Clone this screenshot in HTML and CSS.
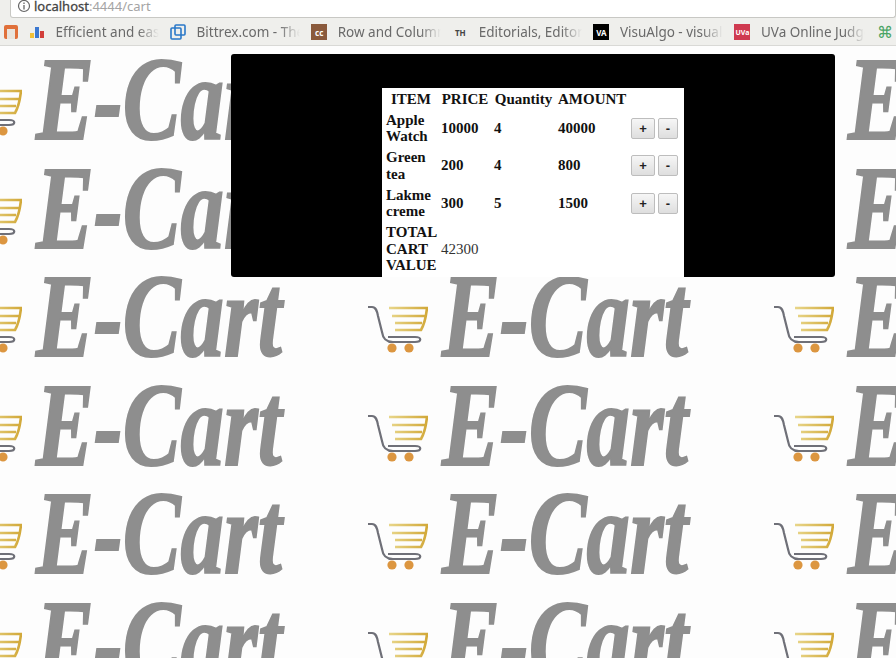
FILE: index.html
```html
<!DOCTYPE html>
<html>
<head>
  <title>Cart</title>
  <link rel="stylesheet" href="styles.css">
</head>
<body>
  <svg class="defs" width="0" height="0">
    <defs>
      <linearGradient id="gold" x1="0" y1="0" x2="1" y2="0">
        <stop offset="0" stop-color="#e8d68a"/>
        <stop offset="1" stop-color="#d2a93a"/>
      </linearGradient>
    </defs>
    <symbol id="cart" viewBox="0 0 60 48">
      <path d="M0 2 H4 C8 2 9 6 10 11 L14 27 C15 34 18 37 25 37 H47 C54 37 54 32 47 32 H20" fill="none" stroke="#6f7078" stroke-width="2.2"/>
      <path d="M21 3 H59 C58 12 56 20 53 25 H27 M24 11 H57 M27 18 H54" fill="none" stroke="url(#gold)" stroke-width="2.6"/>
      <circle cx="24" cy="43" r="4.6" fill="#dc9640"/>
      <circle cx="41" cy="43" r="4.6" fill="#dc9640"/>
    </symbol>
  </svg>

  <div class="page">
    <div class="addressRow">
      <div class="addressBar">
        <svg class="infoIcon" viewBox="0 0 14 14"><circle cx="7" cy="7" r="5.5" fill="none" stroke="#666" stroke-width="1.2"/><path d="M7 6 V10.5 M7 3.6 V5" stroke="#666" stroke-width="1.3"/></svg>
        <span class="host">localhost</span><span class="port">:4444/cart</span>
      </div>
    </div>

    <div class="bookmarks">
      <svg class="bmIcon first" viewBox="0 0 16 16"><rect x="1" y="1" width="14" height="14" rx="2" fill="#e0703a"/><rect x="4" y="5" width="8" height="10" fill="#e9e4dc"/></svg>
      <svg class="bmIcon" viewBox="0 0 16 16"><rect x="1" y="9" width="4" height="5" fill="#f2c037"/><rect x="6" y="3" width="4" height="11" fill="#3c78d0"/><rect x="11" y="7" width="4" height="7" fill="#d23f3a"/></svg>
      <span class="bmText">Efficient and easy</span>
      <svg class="bmIcon" viewBox="0 0 16 16"><rect x="1" y="4" width="10" height="11" rx="1" fill="none" stroke="#2a78c8" stroke-width="1.6"/><rect x="5" y="1" width="10" height="10" rx="1" fill="none" stroke="#2a78c8" stroke-width="1.6"/></svg>
      <span class="bmText">Bittrex.com - The</span>
      <span class="bmBadge brown">cc</span>
      <span class="bmText">Row and Column</span>
      <span class="bmBadge plain">TH</span>
      <span class="bmText">Editorials, Editor</span>
      <span class="bmBadge black">VA</span>
      <span class="bmText">VisuAlgo - visual</span>
      <span class="bmBadge red">UVa</span>
      <span class="bmText">UVa Online Judge</span>
      <span class="bmGreen">⌘</span>
    </div>

    <div class="wall">
      <div class="tile"><svg class="cartLogo"><use href="#cart"/></svg><span class="brand">E-Cart</span></div>
      <div class="tile"><svg class="cartLogo"><use href="#cart"/></svg><span class="brand">E-Cart</span></div>
      <div class="tile"><svg class="cartLogo"><use href="#cart"/></svg><span class="brand">E-Cart</span></div>
      <div class="tile"><svg class="cartLogo"><use href="#cart"/></svg><span class="brand">E-Cart</span></div>
      <div class="tile"><svg class="cartLogo"><use href="#cart"/></svg><span class="brand">E-Cart</span></div>
      <div class="tile"><svg class="cartLogo"><use href="#cart"/></svg><span class="brand">E-Cart</span></div>
      <div class="tile"><svg class="cartLogo"><use href="#cart"/></svg><span class="brand">E-Cart</span></div>
      <div class="tile"><svg class="cartLogo"><use href="#cart"/></svg><span class="brand">E-Cart</span></div>
      <div class="tile"><svg class="cartLogo"><use href="#cart"/></svg><span class="brand">E-Cart</span></div>
      <div class="tile"><svg class="cartLogo"><use href="#cart"/></svg><span class="brand">E-Cart</span></div>
      <div class="tile"><svg class="cartLogo"><use href="#cart"/></svg><span class="brand">E-Cart</span></div>
      <div class="tile"><svg class="cartLogo"><use href="#cart"/></svg><span class="brand">E-Cart</span></div>
      <div class="tile"><svg class="cartLogo"><use href="#cart"/></svg><span class="brand">E-Cart</span></div>
      <div class="tile"><svg class="cartLogo"><use href="#cart"/></svg><span class="brand">E-Cart</span></div>
      <div class="tile"><svg class="cartLogo"><use href="#cart"/></svg><span class="brand">E-Cart</span></div>
      <div class="tile"><svg class="cartLogo"><use href="#cart"/></svg><span class="brand">E-Cart</span></div>
      <div class="tile"><svg class="cartLogo"><use href="#cart"/></svg><span class="brand">E-Cart</span></div>
      <div class="tile"><svg class="cartLogo"><use href="#cart"/></svg><span class="brand">E-Cart</span></div>
    </div>

    <div class="modal">
      <table class="cartTable">
        <thead>
          <tr>
            <th>ITEM</th>
            <th>PRICE</th>
            <th>Quantity</th>
            <th>AMOUNT</th>
            <th></th>
          </tr>
        </thead>
        <tbody>
          <tr>
            <th>Apple Watch</th>
            <th>10000</th>
            <th>4</th>
            <th>40000</th>
            <td class="actions"><button class="btnPlus">+</button><button class="btnMinus">-</button></td>
          </tr>
          <tr>
            <th>Green tea</th>
            <th>200</th>
            <th>4</th>
            <th>800</th>
            <td class="actions"><button class="btnPlus">+</button><button class="btnMinus">-</button></td>
          </tr>
          <tr>
            <th>Lakme creme</th>
            <th>300</th>
            <th>5</th>
            <th>1500</th>
            <td class="actions"><button class="btnPlus">+</button><button class="btnMinus">-</button></td>
          </tr>
          <tr>
            <th>TOTAL CART VALUE</th>
            <td>42300</td>
            <td></td>
            <td></td>
            <td></td>
          </tr>
        </tbody>
      </table>
    </div>
  </div>
</body>
</html>
```

FILE: styles.css
```css
* {
  box-sizing: border-box;
}

html,
body {
  margin: 0;
  height: 100%;
  overflow: hidden;
}

body {
  background-color: #fdfdfd;
  font-family: "Noto Sans", sans-serif;
}

.defs {
  display: block;
  height: 0;
}

.page {
  position: relative;
  width: 896px;
  height: 658px;
  overflow: hidden;
  filter: blur(0.4px);
}

/* browser bars */
.addressRow {
  height: 19px;
  padding-left: 10px;
  padding-right: 0;
  background-color: #efefec;
}

.addressBar {
  height: 18px;
  display: flex;
  align-items: center;
  padding: 0 0 6px 6px;
  background-color: #fff;
  border: 1px solid #c8c8c4;
  border-top: 0;
  border-radius: 0 0 3px 3px;
  font-size: 13px;
}

.infoIcon {
  width: 14px;
  height: 14px;
  margin-right: 3px;
}

.host {
  color: #444;
  -webkit-text-stroke: 0.3px #444;
}

.port {
  color: #a4a4a4;
}

.bookmarks {
  height: 27px;
  display: flex;
  align-items: center;
  padding-left: 3px;
  background-color: #efefec;
  border-bottom: 1px solid #d9d9d6;
  font-size: 13.5px;
  color: #6a6a6a;
  white-space: nowrap;
}

.bmIcon,
.bmBadge {
  flex: none;
  width: 16px;
  height: 16px;
}

.bmIcon.first {
  margin-right: 10px;
}

.bmBadge {
  display: flex;
  align-items: center;
  justify-content: center;
  font-size: 8px;
  font-weight: 700;
  color: #fff;
}

.brown {
  background-color: #8a5a3c;
}

.plain {
  background-color: transparent;
  color: #444;
}

.black {
  background-color: #000;
}

.red {
  background-color: #cf3a50;
  font-size: 7px;
}

.bmText {
  width: 103.6px;
  margin: 0 11px 0 10.5px;
  overflow: hidden;
  -webkit-mask-image: linear-gradient(to right, #000 80%, transparent);
  mask-image: linear-gradient(to right, #000 80%, transparent);
}

.bmGreen {
  margin-left: 1px;
  color: #4aa564;
  font-size: 16px;
}

/* repeated logo background */
.wall {
  display: grid;
  grid-template-columns: repeat(3, 406px);
  grid-auto-rows: 108.5px;
  height: 612px;
  margin-left: -46px;
  overflow: hidden;
}

.tile {
  display: flex;
  align-items: flex-start;
  overflow: visible;
}

.cartLogo {
  flex: none;
  width: 60px;
  height: 48px;
  margin: 42px 0 0 8px;
}

.brand {
  margin-left: 14px;
  font-family: "Liberation Serif", serif;
  font-size: 118px;
  font-weight: 700;
  font-style: italic;
  line-height: 108px;
  color: #8e8e8e;
  -webkit-text-stroke: 2px #8e8e8e;
  transform: scaleX(0.735);
  transform-origin: left top;
  white-space: nowrap;
}

/* cart popup */
.modal {
  position: absolute;
  left: 231px;
  top: 54px;
  width: 604px;
  height: 223px;
  display: flex;
  justify-content: center;
  padding-top: 34px;
  background-color: #000;
  border-radius: 3px;
}

.cartTable {
  width: 302px;
  height: 189px;
  background-color: #fff;
  font-family: "Liberation Serif", serif;
  font-size: 15px;
  line-height: 16.5px;
  color: #111;
  table-layout: fixed;
}

.cartTable th,
.cartTable td {
  padding: 1px 1px 1px 2px;
  text-align: left;
}

.cartTable th:nth-child(1) {
  width: 53px;
}

.cartTable th:nth-child(2) {
  width: 51px;
}

.cartTable th:nth-child(3) {
  width: 62px;
}

.cartTable th:nth-child(4) {
  width: 71px;
}

.cartTable thead th {
  text-align: center;
}

.cartTable tbody td {
  color: #333;
}

.cartTable .actions {
  white-space: nowrap;
}

.btnPlus,
.btnMinus {
  height: 21px;
  padding: 0;
  background: linear-gradient(#f6f6f6, #dedede);
  border: 1px solid #bdbdbd;
  border-radius: 2px;
  font-family: "Liberation Sans", sans-serif;
  font-size: 13px;
  font-weight: 700;
  color: #222;
}

.btnPlus {
  width: 24px;
  margin-right: 3px;
}

.btnMinus {
  width: 20px;
}
```
